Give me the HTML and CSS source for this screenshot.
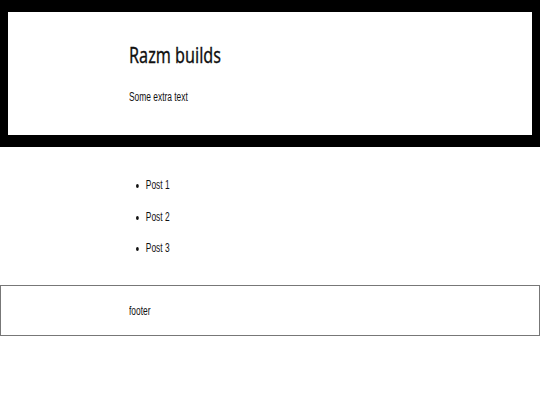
FILE: index.html
```html
<!DOCTYPE html>
<html>
<head>
<meta charset="utf-8">
<link rel="stylesheet" href="styles.css">
</head>
<body>
<header class="site-header">
  <div class="header-box">
    <div class="wrap">
      <h1 class="title"><span class="title-text">Razm builds</span></h1>
      <p class="extra"><span class="narrow">Some extra text</span></p>
    </div>
  </div>
</header>
<main class="wrap content">
  <ul class="posts">
    <li>Post 1</li>
    <li>Post 2</li>
    <li>Post 3</li>
  </ul>
</main>
<footer class="site-footer">
  <div class="wrap"><span class="narrow">footer</span></div>
</footer>
</body>
</html>
```
FILE: styles.css
```css
html, body {
  margin: 0;
  padding: 0;
  background: #fff;
  color: #111;
  font-family: "Liberation Sans", Arial, sans-serif;
  font-size: 12px;
}
.wrap {
  width: 282px;
  margin: 0 auto;
}
.narrow {
  display: inline-block;
  transform: scaleX(0.7);
  transform-origin: 0 50%;
}
.site-header {
  background: #000;
  padding: 12px 8px;
}
.header-box {
  background: #fff;
  height: 123px;
  padding-top: 31px;
  box-sizing: border-box;
}
.title {
  margin: 0;
  font-family: "Noto Sans", "Liberation Sans", sans-serif;
  font-weight: 400;
  font-size: 21px;
  line-height: 24px;
  -webkit-text-stroke: 0.3px #111;
}
.title-text {
  display: inline-block;
  transform: scaleX(0.77);
  transform-origin: 0 50%;
}
.extra {
  margin: 22px 0 0;
  line-height: 16px;
}
.content {
  padding-top: 31px;
}
.posts {
  margin: 0;
  padding-left: 24px;
  display: flex;
  flex-direction: column;
  gap: 17.6px;
  transform: scaleX(0.7);
  transform-origin: 0 0;
}
.posts li {
  line-height: 14px;
}
.site-footer {
  margin-top: 30px;
  border: 1px solid #777;
  height: 49px;
  display: flex;
  align-items: center;
}
.site-footer .wrap {
  line-height: 14px;
}
```
